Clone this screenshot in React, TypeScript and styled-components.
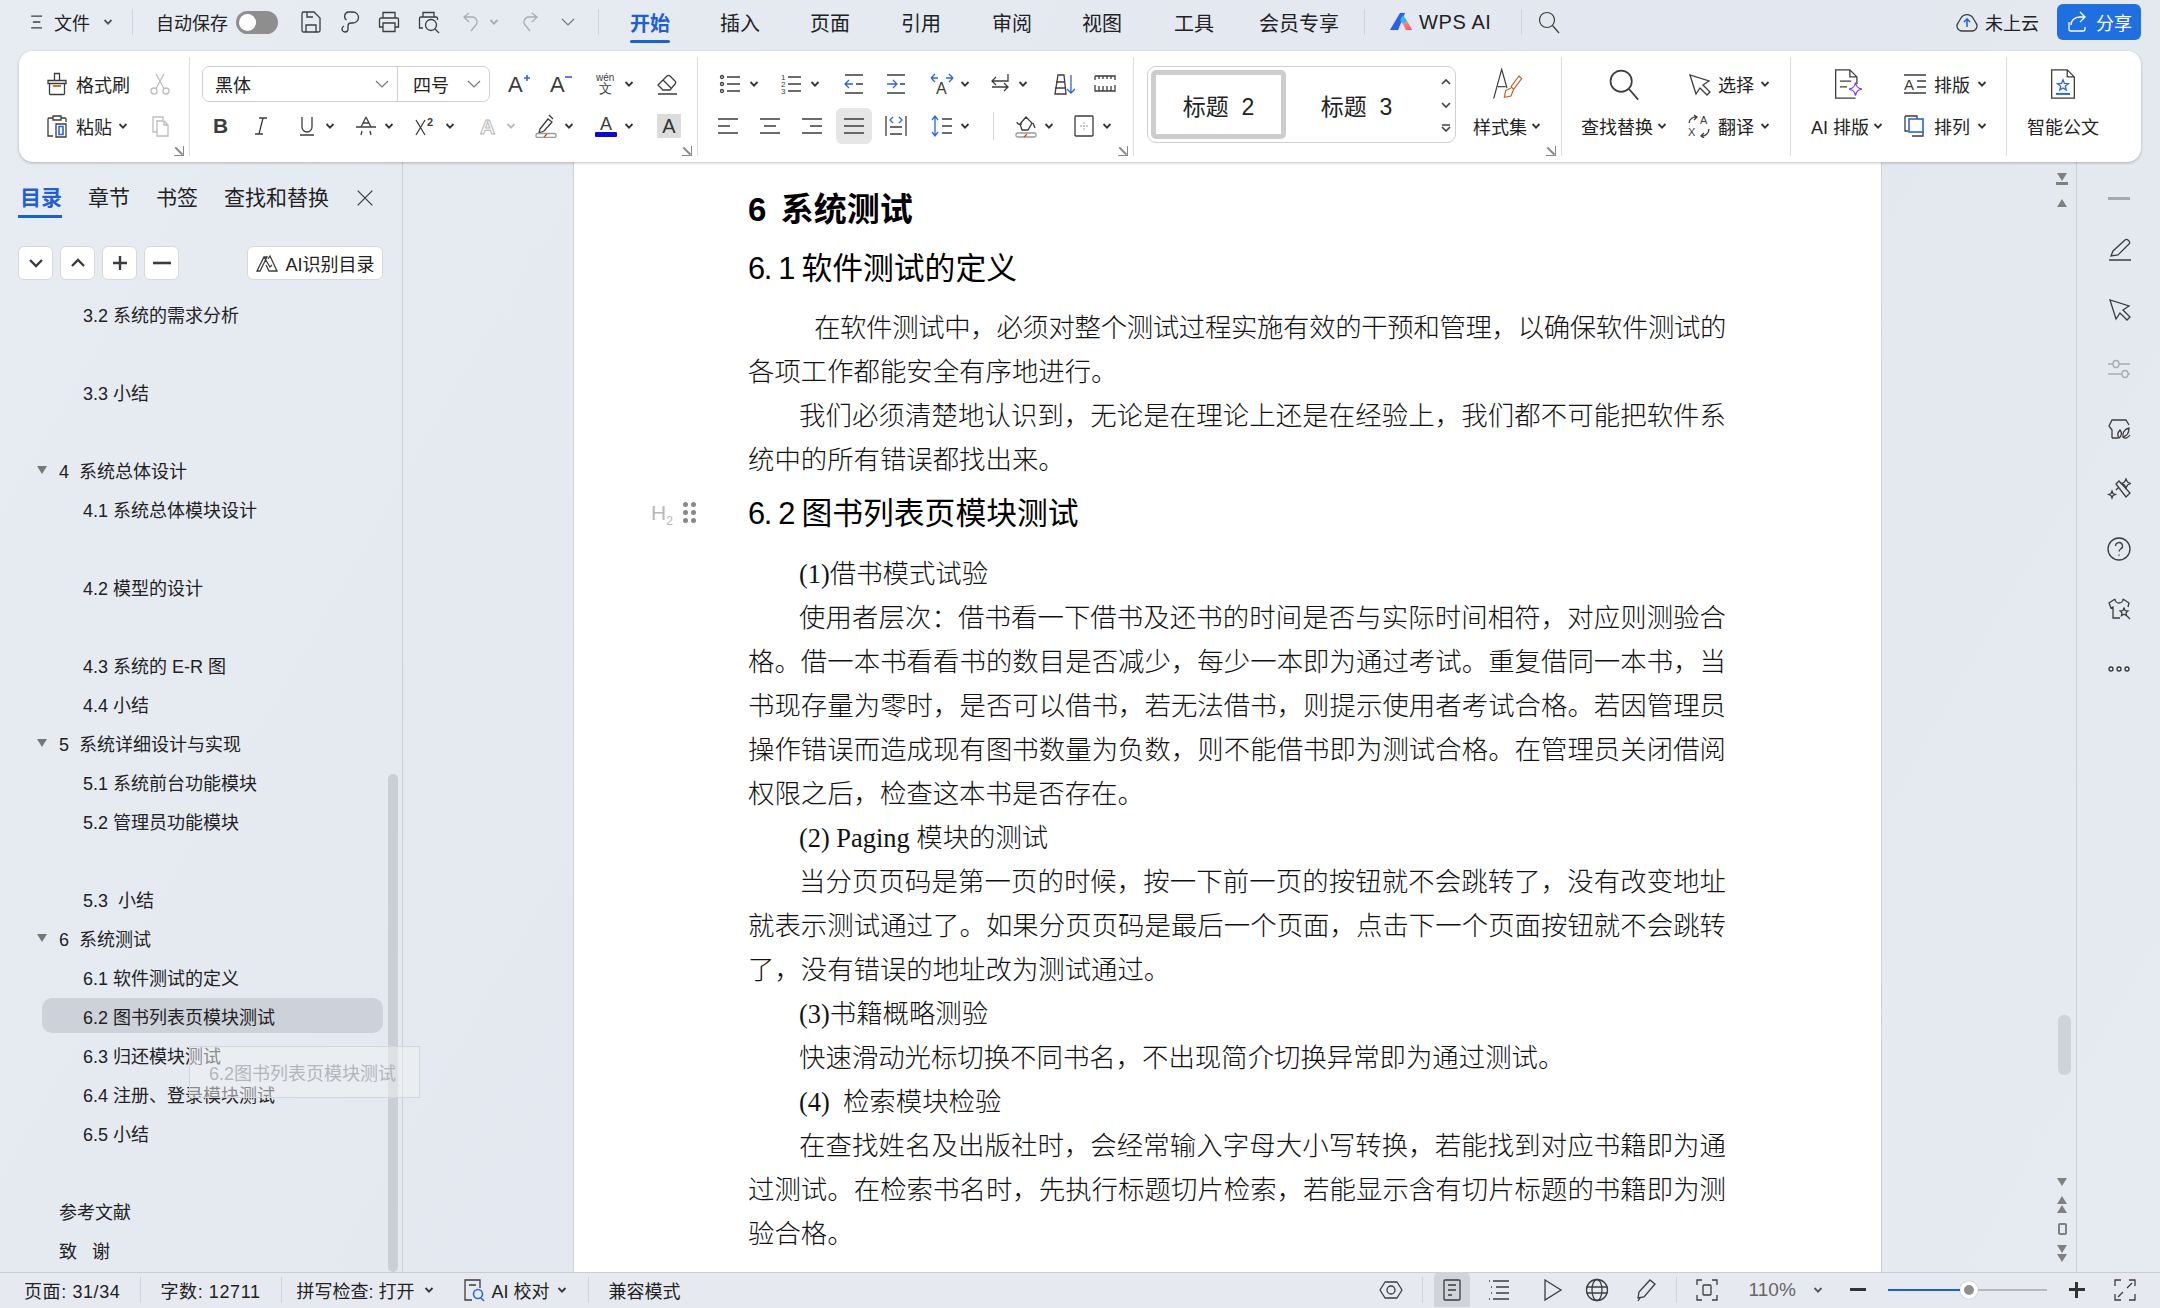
import React from 'react'
import styled, { createGlobalStyle } from 'styled-components'

const GlobalStyle = createGlobalStyle`
    html, body {
        margin: 0;
        height: 100%;
        overflow: hidden;
    }
    * {
        box-sizing: border-box;
    }
    body {
        font-family: "Liberation Sans", "Noto Sans CJK SC", sans-serif;
        color: #222;
    }
`

const Shell = styled.div`
    height: 100vh;
    display: flex;
    flex-direction: column;
    background: linear-gradient(120deg, #e7ecf3, #e3e7ef 60%, #e6ebf1);
    overflow: hidden;
`

/* ---------- icons ---------- */
const Glyph = styled.svg<{ $c?: string; $sw?: number }>`
    display: block;
    flex-shrink: 0;
    color: ${(p) => p.$c || '#3c3c3c'};
    fill: none;
    stroke: currentColor;
    stroke-width: ${(p) => p.$sw || 1.3};
`
const GlyphText = styled.text<{ $bold?: boolean }>`
    font-family: "Liberation Sans", sans-serif;
    font-weight: ${(p) => (p.$bold ? 700 : 400)};
    fill: currentColor;
    stroke: none;
`
type IcProps = { s?: number; c?: string; sw?: number; children?: React.ReactNode }
const Ic = ({ s = 24, c, sw, children }: IcProps) => (
    <Glyph width={s} height={s} viewBox="0 0 24 24" $c={c} $sw={sw}>
        {children}
    </Glyph>
)
const BLUE = '#2a66dc'

const Caret = ({ c = '#333' }: { c?: string }) => (
    <Glyph width={10} height={6} viewBox="0 0 10 6" $c={c} $sw={1.8}>
        <path d="M1.5 1 5 4.6 8.5 1" />
    </Glyph>
)
const ThinChevron = () => (
    <Glyph width={14} height={8} viewBox="0 0 14 8" $c="#777" $sw={1.2}>
        <path d="M1 1l6 6 6-6" />
    </Glyph>
)
const MiniArrow = ({ d }: { d: string }) => (
    <Glyph width={12} height={8} viewBox="0 0 12 8" $c="#444" $sw={1.7}>
        <path d={d} />
    </Glyph>
)
const Launcher = styled.span`
    position: absolute;
    right: 5px;
    bottom: 0;
    width: 10px;
    height: 10px;
    &::before {
        content: '';
        position: absolute;
        inset: 0;
        border-right: 1.5px solid #888;
        border-bottom: 1.5px solid #888;
    }
    &::after {
        content: '';
        position: absolute;
        left: 0;
        top: 4px;
        width: 10px;
        height: 1.5px;
        background: #888;
        transform: rotate(45deg);
    }
`

const Save = () => <Ic><path d="M3 3.5A1.5 1.5 0 0 1 4.5 2H15l6 6v12.5a1.5 1.5 0 0 1-1.5 1.5h-15A1.5 1.5 0 0 1 3 20.5z" /><path d="M8 2v5h6M7 22v-7h10v7" /></Ic>
const KeyLoop = () => <Ic><path d="M10 2h5a5.5 5.5 0 0 1 0 11h-2a3 3 0 0 0-3 3v3a3 3 0 0 1-6 0c0-1.500 1-2.500 2-3M10 2a4.500 4.500 0 0 0-1.500 8" /></Ic>
const Printer = () => <Ic><path d="M6 8V2.500h12V8M6 17H2.500V9.500A1.500 1.500 0 0 1 4 8h16a1.500 1.500 0 0 1 1.500 1.500V17H18" /><path d="M6 13h12v8.500H6z" /></Ic>
const PrintPreview = () => <Ic><path d="M6 7V2.500h11V7M6 18H2.500V8.500A1.500 1.500 0 0 1 4 7h15a1.500 1.500 0 0 1 1.500 1.500V10" /><circle cx="14" cy="15" r="5.500" /><path d="M18 19l4 4" /></Ic>
const Undo = () => <Ic c="#a9acb2"><path d="M10 3 5 7l5 5M5 7h8a5 5 0 0 1 3 9l-4 5" /></Ic>
const Redo = () => <Ic c="#a9acb2"><path d="M14 3l5 4-5 5M19 7h-8a5 5 0 0 0-3 9l4 5" /></Ic>
const Menu = () => <Ic s={20} sw={1.6}><path d="M5 5h13M7 12h9M5 19h13" /></Ic>
const WpsLogo = () => (
    <Glyph width={24} height={20} viewBox="0 0 24 20" $sw={0.1}>
        <defs>
            <linearGradient id="wpsG" x1="0" y1="0" x2="1" y2="1">
                <stop offset="0" stopColor="#ffa15c" />
                <stop offset="1" stopColor="#f2478e" />
            </linearGradient>
        </defs>
        <path d="M0 18 10 1h5L8 18z" fill="#2f5fe6" />
        <path d="M10 8l3-5 4 6-4 3z" fill="#38b8ee" />
        <path d="M13 12l4-3 5 9h-6z" fill="url(#wpsG)" />
    </Glyph>
)
const SearchGlass = ({ s = 24 }: { s?: number }) => <Ic s={s} sw={1.2}><circle cx="10" cy="10" r="7.5" /><path d="M15.5 15.5 22 23" /></Ic>
const CloudUp = () => <Ic><path d="M7 21h10a5 5 0 0 0 4-8l-3-5a7 7 0 0 0-12 0l-3 5a5 5 0 0 0 4 8z" /><path d="M12 17V9M9 12l3-3 3 3" stroke={BLUE} strokeWidth="1.6" /></Ic>
const ShareArrow = () => <Ic c="#fff"><path d="M14 2l5 5-5 5M19 7h-5c-6 0-9 4-9 8M3 12v7a2 2 0 0 0 2 2h12a2 2 0 0 0 2-2v-2" /></Ic>

const Brush = () => <Ic><path d="M9.5 1.5h5v7h-5zM3 8.5h18v3H3zM4.5 11.5v10a1 1 0 0 0 1 1h13a1 1 0 0 0 1-1v-10" /><path d="M8 14h8" stroke="#c77828" strokeWidth="2" /></Ic>
const Paste = () => <Ic><path d="M8 4H4a1 1 0 0 0-1 1v17h5M16 4h4a1 1 0 0 1 1 1v3M8 2h8v4H8z" /><path d="M11 10h10v13H11z" /><path d="M14 12.5h4v8h-4z" stroke={BLUE} strokeWidth="1.6" /></Ic>
const Scissor = () => <Ic c="#bdbdbd"><circle cx="6" cy="19" r="3" /><circle cx="18" cy="19" r="3" /><path d="M8 16.5 16 2M16 16.5 8 2" /></Ic>
const CopyDoc = () => <Ic c="#bdbdbd"><path d="M15 6V3H5v15h4" /><path d="M9 7h7l4 4v11H9zM16 7v4h4" /></Ic>
const Eraser = () => <Ic><path d="M3 13 12 4a2 2 0 0 1 3 0l5 5a2 2 0 0 1 0 3l-5 6H8z" /><path d="M8 8l8 8M3 22h19" /></Ic>
const LetterA = ({ c, size = 22, y = 20, x = 4 }: { c?: string; size?: number; y?: number; x?: number }) => (
    <GlyphText x={x} y={y} fontSize={size} fill={c}>A</GlyphText>
)
const GrowFont = () => <Ic c="#3c3c3c"><LetterA x={1} /><path d="M17 6h6M20 3v6" stroke={BLUE} strokeWidth="1.6" /></Ic>
const ShrinkFont = () => <Ic c="#3c3c3c"><LetterA x={1} /><path d="M16 5h7" stroke={BLUE} strokeWidth="1.6" /></Ic>
const Pinyin = () => <Ic c="#3c3c3c"><GlyphText x="2" y="9" fontSize="10">wén</GlyphText><GlyphText x="5" y="21" fontSize="13">文</GlyphText></Ic>
const Bold = () => <Ic c="#3c3c3c"><GlyphText x="5" y="19" fontSize="21" $bold>B</GlyphText></Ic>
const Italic = () => <Ic><path d="M10 4h8M6 20h8M14 4l-4 16" /></Ic>
const Under = () => <Ic c="#3c3c3c"><path d="M7 3v10a5 5 0 0 0 10 0V3M5 21h14" /></Ic>
const Strike = () => <Ic c="#3c3c3c"><path d="M12 3 7 13M12 3l5 10M7 21l1-4M17 21l-1-4M2 13h20M9 9h6" /></Ic>
const Super = () => <Ic c="#3c3c3c"><path d="M3 6l9 15M12 6l-9 15" /><GlyphText x="14" y="12" fontSize="11" $bold>2</GlyphText></Ic>
const OutlineA = () => <Ic c="#b5b5b5"><GlyphText x="4" y="20" fontSize="21" $bold style={{ fill: 'none', stroke: 'currentColor', strokeWidth: 1 }}>A</GlyphText></Ic>
const Highlight = () => <Ic><path d="M6 15 14 5l4 3-8 9-5 2zM15 1l4 4" /><rect x="2" y="19.5" width="20" height="4" rx="1.5" stroke="#999" /><path d="M10 23l3-3" stroke="#e33" /></Ic>
const ColorA = () => (
    <Ic c="#3c3c3c"><GlyphText x="6" y="16" fontSize="18">A</GlyphText><rect x="1" y="18" width="22" height="5" rx="1" fill="#0b0bd0" stroke="none" /></Ic>
)
const ShadeBox = styled.span`
    display: flex;
    align-items: center;
    justify-content: center;
    width: 24px;
    height: 24px;
    background: #dcdcdc;
    color: #333;
    font-size: 20px;
`

const Bullets = () => <Ic><circle cx="3" cy="5" r="1.5" /><circle cx="3" cy="12" r="1.5" /><circle cx="3" cy="19" r="1.5" /><path d="M8 5h13M8 12h13M8 19h13" /></Ic>
const Numbered = () => <Ic c="#3c3c3c"><GlyphText x="1" y="8" fontSize="8">1</GlyphText><GlyphText x="1" y="15" fontSize="8">2</GlyphText><GlyphText x="1" y="22" fontSize="8">3</GlyphText><path d="M8 5h13M8 12h13M8 19h13" /></Ic>
const Outdent = () => <Ic><path d="M3 3h18M3 21h18M14 12h7" /><path d="M11 12H3M7 8l-4 4 4 4" stroke={BLUE} /></Ic>
const Indent = () => <Ic><path d="M3 3h18M3 21h18M16 12h5" /><path d="M3 12h9M9 8l4 4-4 4" stroke={BLUE} /></Ic>
const SpreadA = () => <Ic c="#3c3c3c"><GlyphText x="6" y="22" fontSize="16">A</GlyphText><path d="M1 6l4-4M1 6l4 4M1 6h7M23 6l-4-4M23 6l-4 4M23 6h-7" stroke={BLUE} /></Ic>
const SwapDir = () => <Ic><path d="M20 2v7H4M8 5 4 9l4 4M4 15h16M16 11l4 4-4 4" /></Ic>
const SortA = () => <Ic><path d="M6 3h6l2 19H3zM4 10h9M3 16h11" /><path d="M19 3v18M15 17l4 4 4-4" stroke={BLUE} /></Ic>
const Ruler = () => <Ic><path d="M2 4h20v4M2 4v4M22 13v6H2v-6M6 4v3M10 4v3M14 4v3M18 4v3M6 14v5M10 14v5M14 14v5M18 14v5" /></Ic>
const AlignIc = ({ d }: { d: string }) => <Ic><path d={d} /></Ic>
const Distrib = () => <Ic><path d="M2 2v20M22 2v20M6 13h12M6 20h12" /><path d="M9 3 6 6l3 3M15 3l3 3-3 3" stroke={BLUE} /></Ic>
const LineSpace = () => <Ic><path d="M12 5h10M12 12h10M12 19h10" /><path d="M5 2v20M2 6l3-4 3 4M2 18l3 4 3-4" stroke={BLUE} /></Ic>
const FillBucket = () => <Ic><path d="M6 10l6-7 6 6-4 7H8zM3 8c0 2 3 3 5 2M19 9l2 5" /><rect x="2" y="19" width="20" height="4" rx="1.5" stroke="#999" /><path d="M10 23l3-3" stroke="#e33" /></Ic>
const BorderBox = () => <Ic><rect x="3" y="2" width="18" height="20" rx="1" /><path d="M12 8v8M8 12h8" stroke="#bbb" strokeDasharray="2 1" /></Ic>
const StyleSet = () => (
    <Ic s={32} sw={0.9}><path d="M2 23 8 1l4 14" /><path d="M5 14h6" /><path d="M21 6l-6 8 2 2 6-8zM15 15l-4 2-1 5 5-1 2-5" stroke="#c8602a" /></Ic>
)
const Pointer = () => <Ic><path d="M3 3l6 19 4-6 7 7 3-3-7-7 6-4z" /></Ic>
const Translate = () => <Ic c="#3c3c3c"><GlyphText x="13" y="10" fontSize="11">A</GlyphText><GlyphText x="1" y="22" fontSize="11">X</GlyphText><path d="M2 9a7 7 0 0 1 8-6M7 1l3 2-3 3M22 15a7 7 0 0 1-8 7M17 24l-3-2 3-3" /></Ic>
const AiDoc = () => <Ic s={34} sw={0.9}><path d="M18 22H4V2h10l5 5v5M14 2v5h5M7 10h8M7 14h5" /><path d="M18 11c.6 3 1.6 4 4.5 4.6-3 .6-3.9 1.6-4.5 4.6-.6-3-1.6-4-4.5-4.6 2.9-.6 3.9-1.6 4.5-4.6z" stroke="#7a3cf0" /></Ic>
const LayoutA = () => <Ic c="#3c3c3c"><GlyphText x="1" y="18" fontSize="15">A</GlyphText><path d="M1 3h22M1 21h22M14 9h9M14 15h9" /></Ic>
const Arrange = () => <Ic><path d="M2 2h12v3M2 2v15h3M20 18v4H9" /><rect x="6" y="5" width="14" height="13" stroke={BLUE} strokeWidth="1.6" /></Ic>
const SmartDoc = () => <Ic s={34} sw={0.9}><path d="M4 2h11l5 5v15H4zM15 2v5h5" /><path d="M12 9l1 2.6 2.8.2-2.2 1.8.7 2.7-2.3-1.5-2.3 1.5.7-2.7-2.2-1.8 2.8-.2z" stroke={BLUE} /><path d="M7 19h10" stroke={BLUE} strokeWidth="1.4" /></Ic>

const AiOutline = () => <Ic s={24}><path d="M2 20 9 6h3l-7 14zM9 6l6 10 2-2M13 8l2-3 7 15h-8l-3-6" /></Ic>
const Cross = () => <Ic s={22} sw={1.4}><path d="M4 4l16 16M20 4 4 20" /></Ic>

const PenLine = () => <Ic><path d="M2 23h22M4 19l2-5L18 3a2 2 0 0 1 3 0l1 1a2 2 0 0 1 0 3L11 18z" /></Ic>
const Sliders = () => <Ic c="#a8abb1"><path d="M1 7h5M12 7h11M1 17h14M21 17h2" /><rect x="6" y="3.5" width="6" height="7" rx="3" /><rect x="15" y="13.5" width="6" height="7" rx="3" /></Ic>
const ShirtLeaf = () => <Ic><path d="M5 21V13L2 9l3-6h14l3 5M5 21h6" /><path d="M12 21c-2-3-1-6 1-8 2 2 2 6-1 8zM16 20c-1-3 1-8 6-9 0 5-2 8-6 9zM16 20c2 2 5 1 7-2" /></Ic>
const Wand = () => <Ic><path d="M9 7l3-3 11 12-4 4zM12 10l-3 3" /><path d="M19 2l1.5 3 3 1.5-3 1.5-1.5 3-1.5-3-3-1.5 3-1.5zM5 14l1 2.5 2.5 1-2.5 1-1 2.5-1-2.5-2.5-1 2.5-1z" /></Ic>
const Help = () => <Ic><circle cx="12" cy="12" r="11" /><path d="M8.5 9a3.5 3.5 0 1 1 5 3.2c-1 .6-1.5 1-1.5 2.3" /><path d="M12 17.5v1.2" /></Ic>
const ShirtStar = () => <Ic><path d="M8 2 2 6l2 5 2-1v11h7M16 2l6 4-1 4M8 2a4 4 0 0 0 8 0" /><path d="M17 11l1.2 2.6 2.8.3-2 2 .6 2.8-2.6-1.4-2.6 1.4.6-2.8-2-2 2.8-.3zM20 19l3 3" /></Ic>
const Dots = () => <Ic sw={1.4}><circle cx="4" cy="12" r="2" /><circle cx="12" cy="12" r="2" /><circle cx="20" cy="12" r="2" /></Ic>

const EyeHex = () => <Ic><path d="M6 4h12l5 8-5 8H6l-5-8z" strokeLinejoin="round" /><circle cx="12" cy="12" r="4" /></Ic>
const PageView = () => <Ic><rect x="4" y="2" width="16" height="20" rx="1" /><path d="M8 7h8M8 12h8M8 17h4" /></Ic>
const Outline = () => <Ic><path d="M6 3h16M9 9h13M9 15h13M6 21h16M2 3h1M4 9h1M4 15h1M2 21h1" /></Ic>
const Play = () => <Ic><path d="M5 2l16 10L5 22z" /></Ic>
const Globe = () => <Ic><circle cx="12" cy="12" r="10.5" /><ellipse cx="12" cy="12" rx="5" ry="10.5" /><path d="M1.5 9h21M1.5 15h21" /></Ic>
const Quill = () => <Ic><path d="M4 20l1-6L16 2l5 4L10 19zM4 23l2-3" /></Ic>
const FitFrame = () => <Ic><path d="M2 7V2h5M17 2h5v5M22 17v5h-5M7 22H2v-5" /><rect x="8" y="7" width="8" height="10" rx="1" /></Ic>
const FullScreen = () => <Ic><path d="M2 8V2h6M16 2h6v6M22 16v6h-6M8 22H2v-6M5 19l5-5M19 5l-5 5" /></Ic>
const AiProof = () => <Ic><path d="M18 10V2H3v20h7M7 7h7" /><circle cx="16" cy="16" r="4.5" stroke={BLUE} strokeWidth="1.6" /><path d="M19 20l3 3" stroke={BLUE} strokeWidth="1.6" /></Ic>

/* ---------- title bar ---------- */
const TitleBar = styled.header`
    height: 51px;
    flex-shrink: 0;
    display: flex;
    align-items: center;
    padding: 0 19px 7px 27px;
    font-size: 18px;
`
const TitleSlot = styled.span<{ $ml?: number }>`
    display: flex;
    align-items: center;
    margin-left: ${(p) => p.$ml || 0}px;
    white-space: nowrap;
`
const VLine = styled.span<{ $ml: number; $h?: number }>`
    width: 1px;
    height: ${(p) => p.$h || 26}px;
    margin-left: ${(p) => p.$ml}px;
    flex-shrink: 0;
    background: #cfd3da;
`
const Toggle = styled.span`
    position: relative;
    width: 42px;
    height: 23px;
    margin-left: 8px;
    border-radius: 12px;
    background: #8e8e8e;
    &::after {
        content: '';
        position: absolute;
        left: 3px;
        top: 3px;
        width: 17px;
        height: 17px;
        border-radius: 50%;
        background: #fff;
    }
`
const TopTab = styled.span<{ $ml: number; $active?: boolean }>`
    position: relative;
    margin-left: ${(p) => p.$ml}px;
    font-size: 20px;
    white-space: nowrap;
    font-weight: ${(p) => (p.$active ? 700 : 400)};
    color: ${(p) => (p.$active ? '#1f5fd0' : '#222')};
    ${(p) =>
        p.$active &&
        `&::after {
            content: '';
            position: absolute;
            left: 0;
            right: 0;
            bottom: -6px;
            height: 3px;
            border-radius: 2px;
            background: #1f5fd0;
        }`}
`
const WpsLabel = styled.span`
    margin-left: 5px;
    width: 72px;
    font-size: 20px;
    letter-spacing: 0.6px;
    white-space: nowrap;
`
const RightCluster = styled.div`
    margin-left: auto;
    display: flex;
    align-items: center;
`
const CloudLabel = styled.span`
    margin-left: 6px;
    margin-right: 18px;
`
const ShareButton = styled.button`
    width: 84px;
    height: 36px;
    display: flex;
    align-items: center;
    justify-content: center;
    gap: 6px;
    border: none;
    border-radius: 6px;
    background: #1f6fe0;
    color: #fff;
    font: inherit;
`

/* ---------- ribbon ---------- */
const Ribbon = styled.section`
    position: relative;
    z-index: 2;
    height: 111px;
    flex-shrink: 0;
    margin: 0 19px;
    padding: 6px 0;
    display: flex;
    background: #fff;
    border-radius: 14px;
    box-shadow: 0 1px 3px rgba(0, 0, 0, 0.25);
    font-size: 18px;
`
const Group = styled.div<{ $w: number; $last?: boolean }>`
    position: relative;
    width: ${(p) => p.$w}px;
    flex-shrink: 0;
    padding-top: 6px;
    display: flex;
    align-items: flex-start;
    border-right: ${(p) => (p.$last ? 'none' : '1px solid #dedede')};
`
const Stack = styled.div`
    display: flex;
    flex-direction: column;
`
const Row = styled.div<{ $pl?: number }>`
    height: 42px;
    display: flex;
    align-items: center;
    padding-left: ${(p) => p.$pl || 0}px;
    white-space: nowrap;
`
const Tool = styled.span<{ $ml?: number; $gap?: number; $box?: boolean }>`
    display: flex;
    align-items: center;
    justify-content: center;
    gap: ${(p) => p.$gap ?? 6}px;
    margin-left: ${(p) => p.$ml || 0}px;
    ${(p) => p.$box && 'width: 36px; height: 36px; border-radius: 6px; background: #e6e6e6;'}
`
const ComboBox = styled.div`
    width: 288px;
    height: 36px;
    display: flex;
    border: 1px solid #cfcfcf;
    border-radius: 7px;
`
const ComboPart = styled.div<{ $w: number; $line?: boolean }>`
    width: ${(p) => p.$w}px;
    padding: 0 8px 0 ${(p) => (p.$line ? 12 : 15)}px;
    display: flex;
    align-items: center;
    justify-content: space-between;
    border-right: ${(p) => (p.$line ? '1px solid #cfcfcf' : 'none')};
`
const StyleBox = styled.div`
    width: 309px;
    height: 77px;
    margin: 3px 0 0 13px;
    padding: 3px;
    display: flex;
    align-items: stretch;
    border: 1px solid #cfcfcf;
    border-radius: 9px;
`
const StyleChip = styled.div<{ $on?: boolean; $w: number }>`
    width: ${(p) => p.$w}px;
    display: flex;
    align-items: center;
    justify-content: center;
    font-size: 23px;
    white-space: pre;
    ${(p) => p.$on && 'border: 5px solid #cdcdcd; border-radius: 5px;'}
`
const StyleArrows = styled.div`
    flex: 1;
    padding-left: 13px;
    display: flex;
    flex-direction: column;
    justify-content: space-around;
`
const LargeTool = styled.div<{ $ml: number }>`
    margin-left: ${(p) => p.$ml}px;
    display: flex;
    flex-direction: column;
    align-items: center;
`
const LargeIcon = styled.div`
    height: 42px;
    display: flex;
    align-items: center;
    justify-content: center;
`
const ToolText = styled.span<{ $ml?: number }>`
    margin-left: ${(p) => p.$ml ?? 0}px;
`

/* ---------- main ---------- */
const Main = styled.main`
    flex: 1;
    min-height: 0;
    display: flex;
`
const Sidebar = styled.aside`
    position: relative;
    width: 403px;
    flex-shrink: 0;
    border-right: 1px solid #cbcfd6;
    font-size: 18px;
`
const TabRow = styled.nav`
    height: 56px;
    padding-left: 20px;
    display: flex;
    gap: 26px;
`
const SideTab = styled.span<{ $active?: boolean }>`
    position: relative;
    padding-top: 22px;
    font-size: 21px;
    line-height: 28px;
    font-weight: ${(p) => (p.$active ? 700 : 400)};
    color: ${(p) => (p.$active ? '#1f5fd0' : '#222')};
    ${(p) =>
        p.$active &&
        `&::after {
            content: '';
            position: absolute;
            left: -2px;
            right: 0;
            bottom: 0;
            height: 3px;
            background: #1f5fd0;
        }`}
`
const CloseTab = styled.span`
    margin-left: -1px;
    padding-top: 25px;
`
const SideTools = styled.div`
    margin: 28px 19px 0 18px;
    display: flex;
    gap: 7px;
`
const SquareButton = styled.button<{ $wide?: boolean }>`
    width: ${(p) => (p.$wide ? '136px' : '35px')};
    height: 34px;
    margin-left: ${(p) => (p.$wide ? 'auto' : '0')};
    padding: 0;
    display: flex;
    align-items: center;
    justify-content: center;
    gap: 6px;
    background: #fff;
    border: 1px solid #d6d8dd;
    border-radius: 6px;
    font: inherit;
    color: #222;
`
const TocList = styled.ul`
    margin: 16px 0 0;
    padding: 0;
    list-style: none;
    display: flex;
    flex-direction: column;
    gap: 4px;
`
const TocRow = styled.li<{ $level: number; $skip?: number; $on?: boolean }>`
    position: relative;
    height: 35px;
    margin: ${(p) => (p.$skip ? 39 : 0)}px 19px 0 42px;
    padding-left: ${(p) => (p.$level === 2 ? 41 : 17)}px;
    display: flex;
    align-items: center;
    white-space: pre;
    color: #222;
    border-radius: 10px;
    background: ${(p) => (p.$on ? '#cdd1da' : 'transparent')};
`
const Triangle = styled.i`
    position: absolute;
    left: -5px;
    top: 14px;
    border-left: 5px solid transparent;
    border-right: 5px solid transparent;
    border-top: 8px solid #777;
`
const DragGhost = styled.div`
    position: absolute;
    left: 189px;
    top: 884px;
    width: 231px;
    height: 52px;
    padding-left: 19px;
    display: flex;
    align-items: center;
    white-space: nowrap;
    color: #b4b6bb;
    background: rgba(240, 241, 244, 0.5);
    border: 1px solid #d3d5da;
    z-index: 3;
`
const SideScroll = styled.div`
    position: absolute;
    left: 388px;
    top: 612px;
    width: 10px;
    height: 498px;
    border-radius: 5px;
    background: #cbced4;
`

const Center = styled.div`
    width: 1479px;
    padding-left: 170px;
    flex-shrink: 0;
`
const Page = styled.article`
    position: relative;
    height: 100%;
    width: 1309px;
    padding: 26px 0 0 174px;
    background: #fff;
    border-left: 1px solid #cdd1d9;
    border-right: 1px solid #cdd1d9;
    color: #111;
    font-family: "Liberation Serif", "Noto Sans CJK SC", serif;
    font-size: 26.4px;
    font-weight: 300;
`
const HeadingNum = styled.span`
    letter-spacing: -1.3px;
`
const ChapterTitle = styled.h1`
    width: 978px;
    margin: 0;
    height: 44px;
    line-height: 44px;
    font-family: "Liberation Sans", "Noto Sans CJK SC", sans-serif;
    font-size: 33px;
    font-weight: 700;
    white-space: pre;
    color: #000;
`
const SectionTitle = styled.h2<{ $mt: number; $mb: number }>`
    position: relative;
    width: 978px;
    height: 44px;
    margin: ${(p) => p.$mt}px 0 ${(p) => p.$mb}px;
    line-height: 44px;
    font-family: "Liberation Sans", "Noto Sans CJK SC", sans-serif;
    font-size: 30.8px;
    font-weight: 400;
    white-space: pre;
    color: #000;
`
const Line = styled.p<{ $indent?: number; $fill?: boolean; $tight?: boolean }>`
    width: 978px;
    height: 44px;
    margin: 0;
    padding-left: ${(p) => p.$indent || 0}px;
    line-height: 44px;
    white-space: pre;
    text-align: ${(p) => (p.$fill ? 'justify' : 'left')};
    text-align-last: ${(p) => (p.$fill ? 'justify' : 'left')};
    ${(p) => p.$fill && 'white-space: normal; overflow: hidden;'}
    ${(p) => p.$tight && 'letter-spacing: -0.45px;'}
`
const HeadingHandle = styled.div`
    position: absolute;
    left: -97px;
    top: 10px;
    display: flex;
    align-items: center;
    gap: 10px;
    font-size: 21px;
    line-height: 21px;
    color: #b8b8b8;
    font-family: "Liberation Sans", sans-serif;
    font-weight: 300;
    sub {
        font-size: 12px;
        line-height: 0;
    }
`
const DotGrid = styled.span`
    display: grid;
    grid-template-columns: 5px 5px;
    gap: 3px;
    i {
        width: 5px;
        height: 5px;
        border-radius: 50%;
        background: #888;
    }
`

const PageRail = styled.div`
    position: relative;
    width: 195px;
    flex-shrink: 0;
    padding: 11px 7px 10px 0;
    display: flex;
    flex-direction: column;
    align-items: flex-end;
    border-right: 1px solid #cbcfd6;
`
const RailCluster = styled.div<{ $bottom?: boolean }>`
    display: flex;
    flex-direction: column;
    align-items: center;
    gap: ${(p) => (p.$bottom ? 10 : 14)}px;
    width: 14px;
    margin-top: ${(p) => (p.$bottom ? 'auto' : '0')};
`
const RailThumb = styled.div`
    position: absolute;
    right: 5px;
    top: 853px;
    width: 13px;
    height: 60px;
    border-radius: 6px;
    background: #cfd2d9;
`
const Triangles = styled.span<{ $up?: boolean }>`
    display: block;
    width: 0;
    height: 0;
    border-left: 5px solid transparent;
    border-right: 5px solid transparent;
    ${(p) => (p.$up ? 'border-bottom: 8px solid #808080;' : 'border-top: 8px solid #808080;')}
`
const RailGroup = styled.span`
    display: flex;
    flex-direction: column;
    align-items: center;
    gap: 1px;
`
const RailDash = styled.span`
    width: 12px;
    height: 3px;
    background: #808080;
`
const RailRing = styled.span`
    width: 9px;
    height: 12px;
    border: 2px solid #808080;
    border-radius: 2px;
`
const RightPanel = styled.div`
    flex: 1;
    padding-top: 24px;
    display: flex;
    flex-direction: column;
    align-items: center;
    gap: 36px;
`
const PanelDash = styled.span`
    display: block;
    width: 22px;
    height: 3px;
    margin: 11px 0 1px;
    background: #a5a8ae;
`

/* ---------- status bar ---------- */
const StatusBar = styled.footer`
    height: 36px;
    flex-shrink: 0;
    display: flex;
    align-items: center;
    padding: 0 0 2px 24px;
    background: #e6eaf0;
    border-top: 1px solid #c9ccd2;
    font-size: 18px;
    position: relative;
    z-index: 2;
`
const StatusText = styled.span<{ $ml?: number; $muted?: boolean; $wide?: boolean }>`
    margin-left: ${(p) => p.$ml || 0}px;
    white-space: nowrap;
    color: ${(p) => (p.$muted ? '#666' : '#222')};
    font-size: ${(p) => (p.$muted ? 19 : 18)}px;
    letter-spacing: ${(p) => (p.$wide ? 0.6 : 0)}px;
`
const StatusIcon = styled.span<{ $ml: number; $on?: boolean }>`
    margin-left: ${(p) => p.$ml}px;
    height: 35px;
    display: flex;
    align-items: center;
    ${(p) => p.$on && 'padding: 0 6px; background: #d0d3da; border-radius: 6px 6px 0 0;'}
`
const MiniSymbol = styled.span<{ $ml: number; $plus?: boolean }>`
    position: relative;
    margin-left: ${(p) => p.$ml}px;
    width: 16px;
    height: 3px;
    background: #333;
    ${(p) =>
        p.$plus &&
        `&::after {
            content: '';
            position: absolute;
            left: 6.5px;
            top: -6.5px;
            width: 3px;
            height: 16px;
            background: #333;
        }`}
`
const ZoomTrack = styled.div`
    position: relative;
    width: 159px;
    height: 2px;
    margin-left: 22px;
    background: linear-gradient(to right, #1f5fd0 51%, #b7b9be 51%);
`
const ZoomThumb = styled.span`
    position: absolute;
    left: 72px;
    top: -8px;
    width: 18px;
    height: 18px;
    border-radius: 50%;
    background: #8f8f8f;
    border: 4px solid #fff;
    box-shadow: 0 0 1px rgba(0, 0, 0, 0.4);
`

const toc: { text: string; level: number; skip?: number; open?: boolean; on?: boolean }[] = [
    { text: '3.2 系统的需求分析', level: 2 },
    { text: '3.3 小结', level: 2, skip: 1 },
    { text: '4  系统总体设计', level: 1, skip: 1, open: true },
    { text: '4.1 系统总体模块设计', level: 2 },
    { text: '4.2 模型的设计', level: 2, skip: 1 },
    { text: '4.3 系统的 E-R 图', level: 2, skip: 1 },
    { text: '4.4 小结', level: 2 },
    { text: '5  系统详细设计与实现', level: 1, open: true },
    { text: '5.1 系统前台功能模块', level: 2 },
    { text: '5.2 管理员功能模块', level: 2 },
    { text: '5.3  小结', level: 2, skip: 1 },
    { text: '6  系统测试', level: 1, open: true },
    { text: '6.1 软件测试的定义', level: 2 },
    { text: '6.2 图书列表页模块测试', level: 2, on: true },
    { text: '6.3 归还模块测试', level: 2 },
    { text: '6.4 注册、登录模块测试', level: 2 },
    { text: '6.5 小结', level: 2 },
    { text: '参考文献', level: 1, skip: 1 },
    { text: '致   谢', level: 1 },
]

const App = () => {
    return (
        <Shell>
            <GlobalStyle />
            <TitleBar>
                <Menu />
                <TitleSlot $ml={7}>文件</TitleSlot>
                <TitleSlot $ml={13}><Caret c="#555" /></TitleSlot>
                <VLine $ml={19} />
                <TitleSlot $ml={23}>自动保存</TitleSlot>
                <Toggle />
                <TitleSlot $ml={21}><Save /></TitleSlot>
                <TitleSlot $ml={15}><KeyLoop /></TitleSlot>
                <TitleSlot $ml={15}><Printer /></TitleSlot>
                <TitleSlot $ml={16}><PrintPreview /></TitleSlot>
                <TitleSlot $ml={18}><Undo /></TitleSlot>
                <TitleSlot $ml={6}><Caret c="#a9acb2" /></TitleSlot>
                <TitleSlot $ml={19}><Redo /></TitleSlot>
                <TitleSlot $ml={19}><ThinChevron /></TitleSlot>
                <VLine $ml={23} />
                <TopTab $ml={31} $active>开始</TopTab>
                <TopTab $ml={50}>插入</TopTab>
                <TopTab $ml={50}>页面</TopTab>
                <TopTab $ml={51}>引用</TopTab>
                <TopTab $ml={51}>审阅</TopTab>
                <TopTab $ml={50}>视图</TopTab>
                <TopTab $ml={52}>工具</TopTab>
                <TopTab $ml={45}>会员专享</TopTab>
                <VLine $ml={25} />
                <TitleSlot $ml={25}><WpsLogo /></TitleSlot>
                <WpsLabel>WPS AI</WpsLabel>
                <VLine $ml={30} />
                <TitleSlot $ml={15}><SearchGlass /></TitleSlot>
                <RightCluster>
                    <CloudUp />
                    <CloudLabel>未上云</CloudLabel>
                    <ShareButton><ShareArrow />分享</ShareButton>
                </RightCluster>
            </TitleBar>

            <Ribbon>
                <Group $w={171}>
                    <Stack>
                        <Row $pl={26}>
                            <Brush />
                            <ToolText $ml={7}>格式刷</ToolText>
                            <Tool $ml={18}><Scissor /></Tool>
                        </Row>
                        <Row $pl={26}>
                            <Paste />
                            <ToolText $ml={7}>粘贴</ToolText>
                            <Tool $ml={6}><Caret /></Tool>
                            <Tool $ml={20}><CopyDoc /></Tool>
                        </Row>
                    </Stack>
                    <Launcher />
                </Group>

                <Group $w={508}>
                    <Stack>
                        <Row $pl={12}>
                            <ComboBox>
                                <ComboPart $w={195} $line>黑体<ThinChevron /></ComboPart>
                                <ComboPart $w={91}>四号<ThinChevron /></ComboPart>
                            </ComboBox>
                            <Tool $ml={17}><GrowFont /></Tool>
                            <Tool $ml={18}><ShrinkFont /></Tool>
                            <Tool $ml={21}><Pinyin /><Caret /></Tool>
                            <Tool $ml={21}><Eraser /></Tool>
                        </Row>
                        <Row $pl={18}>
                            <Tool><Bold /></Tool>
                            <Tool $ml={17}><Italic /></Tool>
                            <Tool $ml={22}><Under /><Caret /></Tool>
                            <Tool $ml={19}><Strike /><Caret /></Tool>
                            <Tool $ml={19} $gap={8}><Super /><Caret /></Tool>
                            <Tool $ml={21}><OutlineA /><Caret c="#bbb" /></Tool>
                            <Tool $ml={18}><Highlight /><Caret /></Tool>
                            <Tool $ml={20}><ColorA /><Caret /></Tool>
                            <Tool $ml={23}><ShadeBox>A</ShadeBox></Tool>
                        </Row>
                    </Stack>
                    <Launcher />
                </Group>

                <Group $w={436}>
                    <Stack>
                        <Row $pl={21}>
                            <Tool><Bullets /><Caret /></Tool>
                            <Tool $ml={21}><Numbered /><Caret /></Tool>
                            <Tool $ml={22}><Outdent /></Tool>
                            <Tool $ml={18}><Indent /></Tool>
                            <Tool $ml={22}><SpreadA /><Caret /></Tool>
                            <Tool $ml={18}><SwapDir /><Caret /></Tool>
                            <Tool $ml={24}><SortA /></Tool>
                            <Tool $ml={17}><Ruler /></Tool>
                        </Row>
                        <Row $pl={18}>
                            <Tool><AlignIc d="M2 5h20M2 12h12M2 19h20" /></Tool>
                            <Tool $ml={18}><AlignIc d="M2 5h20M6 12h12M2 19h20" /></Tool>
                            <Tool $ml={18}><AlignIc d="M2 5h20M10 12h12M2 19h20" /></Tool>
                            <Tool $ml={12} $box><AlignIc d="M2 5h20M2 12h20M2 19h20" /></Tool>
                            <Tool $ml={12}><Distrib /></Tool>
                            <Tool $ml={22}><LineSpace /><Caret /></Tool>
                            <VLine $ml={23} $h={28} />
                            <Tool $ml={20}><FillBucket /><Caret /></Tool>
                            <Tool $ml={18}><BorderBox /><Caret /></Tool>
                        </Row>
                    </Stack>
                    <Launcher />
                </Group>

                <Group $w={428}>
                    <StyleBox>
                        <StyleChip $on $w={138}>标题  2</StyleChip>
                        <StyleChip $w={144}>标题  3</StyleChip>
                        <StyleArrows>
                            <MiniArrow d="M2 6l4-4 4 4" />
                            <MiniArrow d="M2 2l4 4 4-4" />
                            <MiniArrow d="M2 1h8M2 3l4 4 4-4" />
                        </StyleArrows>
                    </StyleBox>
                    <LargeTool $ml={17}>
                        <LargeIcon><StyleSet /></LargeIcon>
                        <Row>样式集<Tool $ml={4}><Caret /></Tool></Row>
                    </LargeTool>
                    <Launcher />
                </Group>

                <Group $w={229}>
                    <LargeTool $ml={19}>
                        <LargeIcon><SearchGlass s={34} /></LargeIcon>
                        <Row>查找替换<Tool $ml={4}><Caret /></Tool></Row>
                    </LargeTool>
                    <Stack>
                        <Row $pl={20}><Pointer /><ToolText $ml={7}>选择</ToolText><Tool $ml={6}><Caret /></Tool></Row>
                        <Row $pl={20}><Translate /><ToolText $ml={7}>翻译</ToolText><Tool $ml={6}><Caret /></Tool></Row>
                    </Stack>
                </Group>

                <Group $w={216}>
                    <LargeTool $ml={20}>
                        <LargeIcon><AiDoc /></LargeIcon>
                        <Row>AI 排版<Tool $ml={4}><Caret /></Tool></Row>
                    </LargeTool>
                    <Stack>
                        <Row $pl={20}><LayoutA /><ToolText $ml={7}>排版</ToolText><Tool $ml={7}><Caret /></Tool></Row>
                        <Row $pl={20}><Arrange /><ToolText $ml={7}>排列</ToolText><Tool $ml={7}><Caret /></Tool></Row>
                    </Stack>
                </Group>

                <Group $w={134} $last>
                    <LargeTool $ml={20}>
                        <LargeIcon><SmartDoc /></LargeIcon>
                        <Row>智能公文</Row>
                    </LargeTool>
                </Group>
            </Ribbon>

            <Main>
                <Sidebar>
                    <TabRow>
                        <SideTab $active>目录</SideTab>
                        <SideTab>章节</SideTab>
                        <SideTab>书签</SideTab>
                        <SideTab>查找和替换</SideTab>
                        <CloseTab><Cross /></CloseTab>
                    </TabRow>
                    <SideTools>
                        <SquareButton><Glyph width={16} height={10} viewBox="0 0 16 10" $sw={2.4}><path d="M2 2l6 6 6-6" /></Glyph></SquareButton>
                        <SquareButton><Glyph width={16} height={10} viewBox="0 0 16 10" $sw={2.4}><path d="M2 8l6-6 6 6" /></Glyph></SquareButton>
                        <SquareButton><Glyph width={16} height={16} viewBox="0 0 16 16" $sw={2.4}><path d="M1 8h14M8 1v14" /></Glyph></SquareButton>
                        <SquareButton><Glyph width={18} height={4} viewBox="0 0 18 4" $sw={2.6}><path d="M0 2h18" /></Glyph></SquareButton>
                        <SquareButton $wide><AiOutline />AI识别目录</SquareButton>
                    </SideTools>
                    <TocList>
                        {toc.map((item) => (
                            <TocRow key={item.text} $level={item.level} $skip={item.skip} $on={item.on}>
                                {item.open && <Triangle />}
                                {item.text}
                            </TocRow>
                        ))}
                    </TocList>
                    <SideScroll />
                    <DragGhost>6.2图书列表页模块测试</DragGhost>
                </Sidebar>

                <Center>
                    <Page>
                        <ChapterTitle><HeadingNum>6  </HeadingNum>系统测试</ChapterTitle>
                        <SectionTitle $mt={15} $mb={15}><HeadingNum>6. 1 </HeadingNum>软件测试的定义</SectionTitle>
                        <Line $indent={66} $fill $tight>在软件测试中，必须对整个测试过程实施有效的干预和管理，以确保软件测试的</Line>
                        <Line>各项工作都能安全有序地进行。</Line>
                        <Line $indent={51} $fill>我们必须清楚地认识到，无论是在理论上还是在经验上，我们都不可能把软件系</Line>
                        <Line>统中的所有错误都找出来。</Line>
                        <SectionTitle $mt={10} $mb={16}>
                            <HeadingHandle>
                                <span>H<sub>2</sub></span>
                                <DotGrid><i /><i /><i /><i /><i /><i /></DotGrid>
                            </HeadingHandle>
                            <HeadingNum>6. 2 </HeadingNum>图书列表页模块测试
                        </SectionTitle>
                        <Line $indent={51}>(1)借书模式试验</Line>
                        <Line $indent={51} $fill>使用者层次：借书看一下借书及还书的时间是否与实际时间相符，对应则测验合</Line>
                        <Line $fill>格。借一本书看看书的数目是否减少，每少一本即为通过考试。重复借同一本书，当</Line>
                        <Line $fill>书现存量为零时，是否可以借书，若无法借书，则提示使用者考试合格。若因管理员</Line>
                        <Line $fill>操作错误而造成现有图书数量为负数，则不能借书即为测试合格。在管理员关闭借阅</Line>
                        <Line>权限之后，检查这本书是否存在。</Line>
                        <Line $indent={51}>(2) Paging 模块的测试</Line>
                        <Line $indent={51} $fill>当分页页码是第一页的时候，按一下前一页的按钮就不会跳转了，没有改变地址</Line>
                        <Line $fill>就表示测试通过了。如果分页页码是最后一个页面，点击下一个页面按钮就不会跳转</Line>
                        <Line>了，没有错误的地址改为测试通过。</Line>
                        <Line $indent={51}>(3)书籍概略测验</Line>
                        <Line $indent={51}>快速滑动光标切换不同书名，不出现简介切换异常即为通过测试。</Line>
                        <Line $indent={51}>(4)  检索模块检验</Line>
                        <Line $indent={51} $fill>在查找姓名及出版社时，会经常输入字母大小写转换，若能找到对应书籍即为通</Line>
                        <Line $fill>过测试。在检索书名时，先执行标题切片检索，若能显示含有切片标题的书籍即为测</Line>
                        <Line>验合格。</Line>
                    </Page>
                </Center>

                <PageRail>
                    <RailCluster>
                        <RailGroup>
                            <Triangles />
                            <RailDash />
                        </RailGroup>
                        <Triangles $up />
                    </RailCluster>
                    <RailThumb />
                    <RailCluster $bottom>
                        <Triangles />
                        <RailGroup><Triangles $up /><Triangles $up /></RailGroup>
                        <RailRing />
                        <RailGroup><Triangles /><Triangles /></RailGroup>
                    </RailCluster>
                </PageRail>

                <RightPanel>
                    <PanelDash />
                    <PenLine />
                    <Pointer />
                    <Sliders />
                    <ShirtLeaf />
                    <Wand />
                    <Help />
                    <ShirtStar />
                    <Dots />
                </RightPanel>
            </Main>

            <StatusBar>
                <StatusText $wide>页面: 31/34</StatusText>
                <VLine $ml={20} />
                <StatusText $ml={19} $wide>字数: 12711</StatusText>
                <VLine $ml={20} />
                <StatusText $ml={15}>拼写检查: 打开</StatusText>
                <Tool $ml={9}><Caret /></Tool>
                <StatusIcon $ml={28}><AiProof /></StatusIcon>
                <StatusText $ml={6}>AI 校对</StatusText>
                <Tool $ml={7}><Caret /></Tool>
                <VLine $ml={21} />
                <StatusText $ml={20}>兼容模式</StatusText>
                <StatusIcon $ml={698}><EyeHex /></StatusIcon>
                <VLine $ml={19} />
                <StatusIcon $ml={11} $on><PageView /></StatusIcon>
                <StatusIcon $ml={17}><Outline /></StatusIcon>
                <StatusIcon $ml={29}><Play /></StatusIcon>
                <StatusIcon $ml={21}><Globe /></StatusIcon>
                <StatusIcon $ml={25}><Quill /></StatusIcon>
                <VLine $ml={18} />
                <StatusIcon $ml={18}><FitFrame /></StatusIcon>
                <StatusText $ml={30} $muted>110%</StatusText>
                <Tool $ml={17}><Caret c="#555" /></Tool>
                <MiniSymbol $ml={27} />
                <ZoomTrack><ZoomThumb /></ZoomTrack>
                <MiniSymbol $ml={22} $plus />
                <StatusIcon $ml={28}><FullScreen /></StatusIcon>
            </StatusBar>
        </Shell>
    )
}

export default App
